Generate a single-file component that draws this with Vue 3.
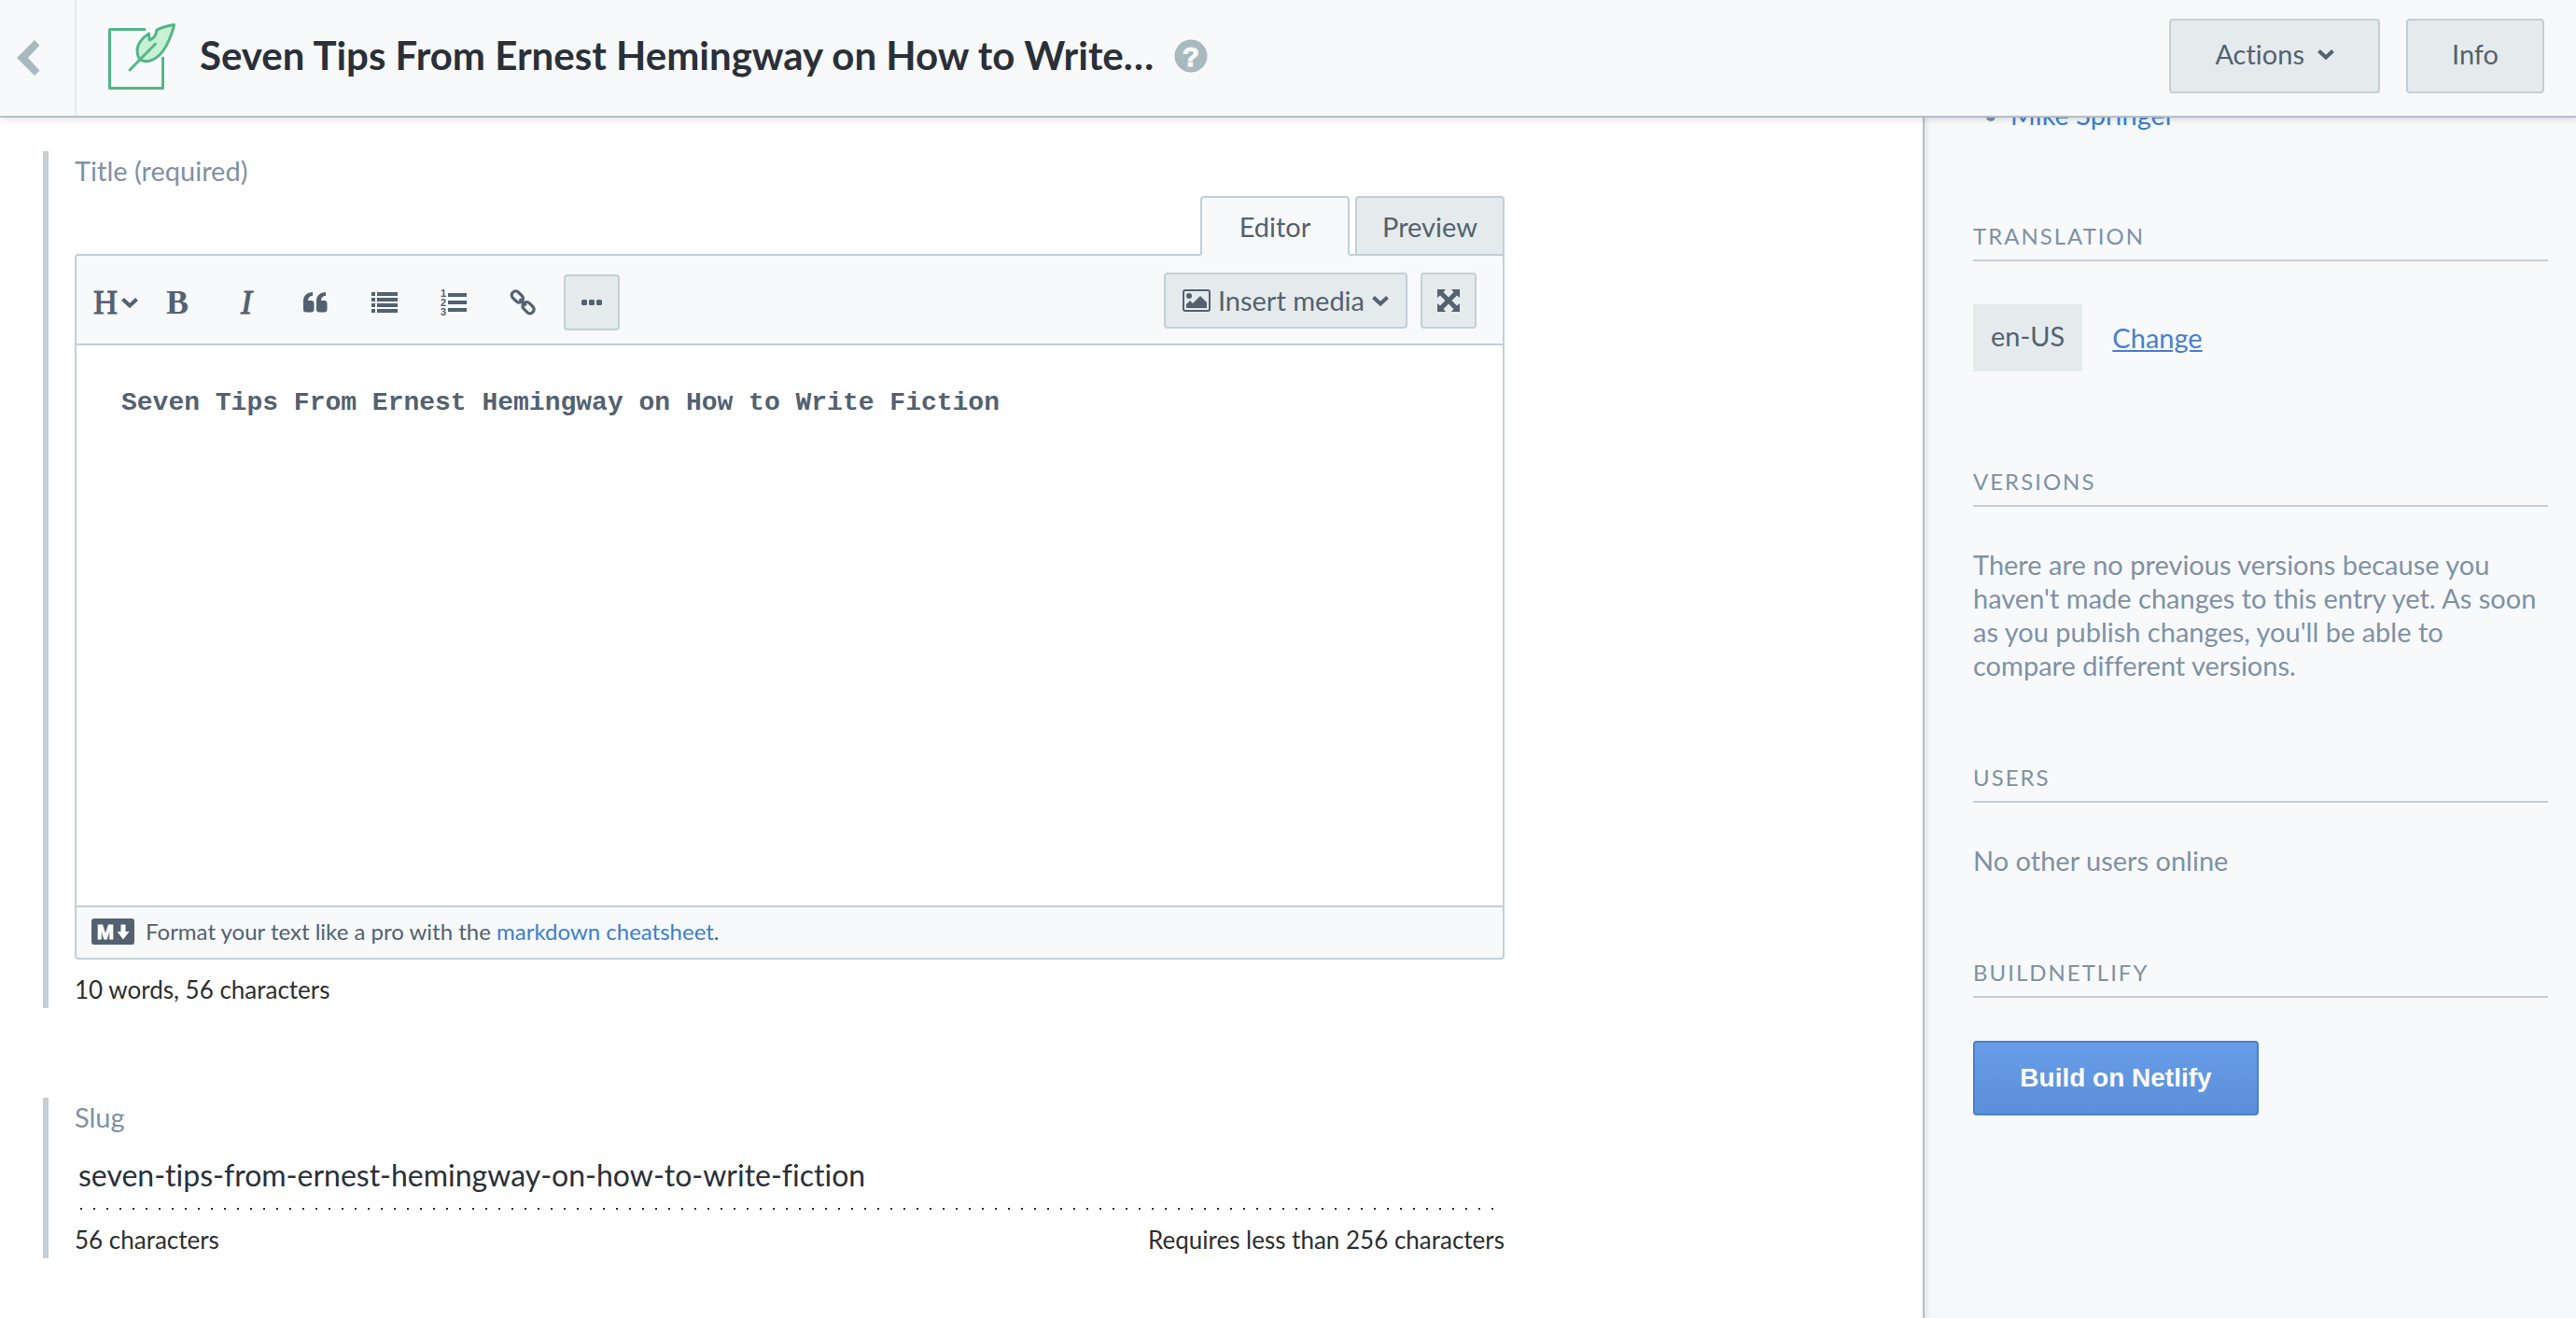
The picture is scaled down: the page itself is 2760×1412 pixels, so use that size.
<script setup>
import { ref } from 'vue'

const body = ref('Seven Tips From Ernest Hemingway on How to Write Fiction')
const slug = ref('seven-tips-from-ernest-hemingway-on-how-to-write-fiction')
</script>

<template>
  <div class="page">
    <header class="topbar">
      <button class="back" aria-label="Back">
        <svg width="26" height="40" viewBox="0 0 26 40"><path d="M20 1 25.500 6.500 13 20 25.500 33.500 20 39 1 20Z" fill="#a9b9c0" /></svg>
      </button>
      <div class="heading">
        <svg width="76" height="76" viewBox="114 22 76 76" fill="none" stroke="#54b686" stroke-width="3" stroke-linecap="round" stroke-linejoin="round" aria-hidden="true">
          <path d="M155 31.500H117.500V94.500H174.500V62" />
          <path d="M186.500 26.500C180 27.500 173 29.500 168 32C167.500 37 165 41 160.500 43C159.500 41 160 38 159.500 36C153 40 147 47 147 54C147 58 148 61 149.500 63.500C152 65.500 157 66 161 65C172 61 177 52 181 43C183.500 37 186 31 186.500 26.500Z" fill="#c8f0d6" />
          <path d="M166.500 47 139 75" />
        </svg>
        <h1>Seven Tips From Ernest Hemingway on How to Write…</h1>
        <button class="help" aria-label="Help">
          <svg width="36" height="36" viewBox="0 0 36 36"><circle cx="18" cy="18" r="17.500" fill="#a9b9c0" /><text class="glyph" x="18" y="29" font-size="30" fill="#f7f9fb" stroke="#f7f9fb">?</text></svg>
        </button>
      </div>
      <div class="actions">
        <button class="btn">Actions
          <svg width="18" height="12" viewBox="0 0 18 12"><path d="M1.500 2.500 9 9.500 16.500 2.500" fill="none" stroke="currentColor" stroke-width="4" /></svg>
        </button>
        <button class="btn">Info</button>
      </div>
    </header>

    <div class="columns">
      <main class="form">
        <section class="field">
          <label class="label" for="body">Title (required)</label>
          <div class="tabs">
            <button class="tab active">Editor</button>
            <button class="tab">Preview</button>
          </div>
          <div class="editor">
            <div class="toolbar">
              <div class="tools">
                <button class="tool serif headings" aria-label="Headings">H<svg width="18" height="12" viewBox="0 0 18 12"><path d="M1.500 2.500 9 9.500 16.500 2.500" fill="none" stroke="currentColor" stroke-width="4" /></svg></button>
                <button class="tool serif bold" aria-label="Bold">B</button>
                <button class="tool serif italic" aria-label="Italic">I</button>
                <button class="tool" aria-label="Quote">
                  <svg width="28" height="28" viewBox="0 0 28 28" fill="currentColor"><path d="M11 3v4C8 7 6 9 6 12h3.500a3 3 0 0 1 3 3v6.500a3 3 0 0 1-3 3H4a3 3 0 0 1-3-3V12C1 7 5 3 11 3ZM25 3v4C22 7 20 9 20 12h3.500a3 3 0 0 1 3 3v6.500a3 3 0 0 1-3 3H18a3 3 0 0 1-3-3V12C15 7 19 3 25 3Z" /></svg>
                </button>
                <button class="tool" aria-label="Bulleted list">
                  <svg width="28" height="28" viewBox="0 0 28 28" fill="currentColor"><path d="M0 3h4v4H0zM6 3h22v4H6zM0 9h4v4H0zM6 9h22v4H6zM0 15h4v4H0zM6 15h22v4H6zM0 21h4v4H0zM6 21h22v4H6z" /></svg>
                </button>
                <button class="tool" aria-label="Numbered list">
                  <svg width="28" height="30" viewBox="0 0 28 30" fill="currentColor"><path d="M8 5h20v4H8zM8 13h20v4H8zM8 21h20v4H8z" /><text class="glyph" x="3" y="9" font-size="11">1</text><text class="glyph" x="3" y="19" font-size="11">2</text><text class="glyph" x="3" y="29" font-size="11">3</text></svg>
                </button>
                <button class="tool" aria-label="Link">
                  <svg width="28" height="28" viewBox="0 0 28 28" fill="none" stroke="currentColor" stroke-width="3.200"><g transform="rotate(45 14 14)"><rect x="-1" y="9.500" width="13.500" height="8.500" rx="4" /><rect x="15.500" y="9.500" width="13.500" height="8.500" rx="4" /><path d="M9 13.800H19" /></g></svg>
                </button>
                <button class="tool square" aria-label="More">
                  <svg width="22" height="6" viewBox="0 0 22 6" fill="currentColor"><rect width="6" height="6" rx="1.500" /><rect x="8" width="6" height="6" rx="1.500" /><rect x="16" width="6" height="6" rx="1.500" /></svg>
                </button>
              </div>
              <div class="media">
                <button class="insert">
                  <svg width="30" height="24" viewBox="0 0 30 24"><rect x="1" y="1" width="28" height="22" rx="2" fill="none" stroke="currentColor" stroke-width="2" /><circle cx="7" cy="7" r="3" fill="currentColor" /><path d="M4 20v-4l4-4 3 3 8-8 7 7v6z" fill="currentColor" /></svg>
                  <span>Insert media</span>
                  <svg width="18" height="12" viewBox="0 0 18 12"><path d="M1.500 2.500 9 9.500 16.500 2.500" fill="none" stroke="currentColor" stroke-width="4" /></svg>
                </button>
                <button class="square" aria-label="Expand">
                  <svg width="24" height="24" viewBox="0 0 24 24" fill="currentColor"><path d="M0 0h9L6.500 3 12 8.500 17.500 3 15 0h9v9l-3-2.500L15.500 12 21 17.500l3-2.500v9h-9l2.500-3L12 15.500 6.500 21 9 24H0v-9l3 2.500L8.500 12 3 6.500 0 9z" /></svg>
                </button>
              </div>
            </div>
            <textarea id="body" v-model="body" spellcheck="false"></textarea>
            <div class="cheats">
              <svg width="46" height="28" viewBox="0 0 46 28"><rect width="46" height="28" rx="3" fill="#536171" /><text class="glyph" x="15" y="22" font-size="22" fill="#fff" stroke="#fff">M</text><path d="M31.500 6.500h5V14H40.500L34 22.500 27.500 14h4z" fill="#fff" /></svg>
              <p>Format your text like a pro with the <a href="#">markdown cheatsheet</a>.</p>
            </div>
          </div>
          <div class="hint"><span>10 words, 56 characters</span></div>
        </section>

        <section class="field">
          <label class="label" for="slug">Slug</label>
          <input id="slug" v-model="slug" class="slug" type="text" spellcheck="false">
          <div class="hint"><span>56 characters</span><span>Requires less than 256 characters</span></div>
        </section>
      </main>

      <aside class="sidebar">
        <ul class="links"><li><a href="#">Mike Springer</a></li></ul>
        <section class="locale">
          <h2>Translation</h2>
          <div class="row"><span class="tag">en-US</span><a class="change" href="#">Change</a></div>
        </section>
        <section>
          <h2>Versions</h2>
          <p>There are no previous versions because you haven't made changes to this entry yet. As soon as you publish changes, you'll be able to compare different versions.</p>
        </section>
        <section>
          <h2>Users</h2>
          <p>No other users online</p>
        </section>
        <section>
          <h2>BuildNetlify</h2>
          <button class="build">Build on Netlify</button>
        </section>
      </aside>
    </div>
  </div>
</template>

<style>
body { margin: 0; background: #fff; }
</style>

<style scoped>
* { box-sizing: border-box; }
.page {
  display: flex; flex-direction: column; min-height: 100vh; overflow: hidden;
  font-family: Lato, "Liberation Sans", sans-serif; font-size: 29px; line-height: 36px; color: #536171;
  font-variant-ligatures: none;
}
button { font: inherit; font-variant-ligatures: none; color: inherit; background: none; border: 0; padding: 0; margin: 0; display: flex; align-items: center; justify-content: center; cursor: pointer; }
svg { display: block; flex: none; }
h1, h2, p, ul { margin: 0; padding: 0; }
a { color: #3c80cf; text-decoration: none; }
.glyph { font-family: "Liberation Sans", sans-serif; font-weight: 700; text-anchor: middle; }

.topbar {
  position: relative; z-index: 2; display: flex; height: 126px; background: #f7f9fb;
  border-bottom: 2px solid #b4c0c9; box-shadow: 0 2px 8px rgba(0, 0, 0, .12);
}
.back { width: 82px; padding-right: 20px; border-right: 2px solid #e5ebed; }
.heading { flex: 1; display: flex; align-items: center; padding: 0 0 4px 32px; min-width: 0; }
h1 { margin-left: 24px; padding-bottom: 2px; font-size: 42px; line-height: 48px; font-weight: 700; color: #2a3039; white-space: nowrap; }
.help { margin-left: 22px; }
.actions { display: flex; align-items: center; gap: 28px; padding: 0 34px 4px 0; }
.btn { height: 80px; padding: 0 47px 4px; gap: 14px; background: #e5ebed; border: 2px solid #c3cfd5; border-radius: 4px; }

.columns { flex: 1; display: flex; align-items: stretch; }
.form { flex: 1; min-width: 0; padding: 36px 46px 40px; }
.field { max-width: 1566px; border-left: 6px solid #c3cfd5; padding: 4px 0 4px 28px; }
.field + .field { margin-top: 96px; }
.label { display: block; line-height: 34px; color: #8091a5; }
.tabs { position: relative; display: flex; justify-content: flex-end; gap: 6px; margin: 10px 0 -2px; }
.tab { width: 160px; height: 64px; padding-top: 2px; background: #e5ebed; border: 2px solid #c3cfd5; border-radius: 4px 4px 0 0; }
.tab.active { background: #f7f9fb; border-bottom-color: #f7f9fb; }
.editor { border: 2px solid #c3cfd5; border-radius: 4px; background: #f7f9fb; overflow: hidden; }
.toolbar { display: flex; justify-content: space-between; align-items: center; height: 96px; padding: 0 28px 0 4px; border-bottom: 2px solid #c3cfd5; }
.tools { display: flex; align-items: center; gap: 14px; padding-top: 6px; }
.tool { width: 60px; height: 60px; }
.serif { font-family: "Liberation Serif", serif; font-size: 36px; -webkit-text-stroke: 1px currentColor; }
.headings { padding-left: 16px; gap: 4px; }
.bold { font-weight: 700; -webkit-text-stroke: 0; }
.italic { font-style: italic; }
.media { display: flex; gap: 14px; padding-top: 2px; }
.square, .insert { height: 60px; background: #e5ebed; border: 2px solid #c3cfd5; border-radius: 4px; }
.square { width: 60px; }
.insert { padding: 0 18px; gap: 8px; }
textarea {
  display: block; width: 100%; height: 600px; padding: 44px 48px; border: 0; outline: 0; resize: none; background: #fff;
  font: 700 28px/36px "Liberation Mono", monospace; color: #536171;
}
.cheats { display: flex; align-items: center; gap: 12px; height: 56px; padding: 0 16px 2px; border-top: 2px solid #c3cfd5; font-size: 24px; }
.hint { display: flex; justify-content: space-between; margin-top: 16px; font-size: 26px; line-height: 32px; color: #2d2f31; }
.slug {
  display: block; width: 100%; height: 62px; margin-top: 20px; padding: 0 4px 14px; border: 0; outline: 0;
  font: inherit; font-size: 32px; font-variant-ligatures: none; color: #2a3039;
  background: repeating-linear-gradient(90deg, transparent 0 6px, #2a3039 6px 8px, transparent 8px 14px) bottom / 100% 2px no-repeat;
}

.sidebar { width: 700px; padding: 0 30px 64px 52px; background: #f7f9fb; border-left: 2px solid #b4c0c9; box-shadow: inset 4px 0 6px -2px rgba(0, 0, 0, .1); color: #8091a5; }
.sidebar section { margin-top: 87px; }
.sidebar p { padding-right: 8px; }
.links { margin: -21px 0 97px; padding-left: 40px; }
.sidebar .locale { margin-top: 0; padding-bottom: 16px; }
h2 { margin-bottom: 44px; padding-bottom: 10px; border-bottom: 2px solid #c3cfd5; font-size: 24px; line-height: 30px; font-weight: 400; letter-spacing: 2px; text-transform: uppercase; }
.row { display: flex; align-items: center; gap: 32px; margin-top: 46px; }
.tag { display: flex; align-items: center; height: 72px; padding: 0 19px 4px; background: #e5ebed; color: #536171; }
.change { color: #4a7fd0; text-decoration: underline; }
.build {
  width: 306px; height: 80px; margin-top: 46px; border: 2px solid #4a7fd0; border-radius: 4px; color: #fff;
  background: linear-gradient(#689de8, #5b8fd8); font-family: "Liberation Sans", sans-serif; font-size: 28px; font-weight: 700;
}
</style>
